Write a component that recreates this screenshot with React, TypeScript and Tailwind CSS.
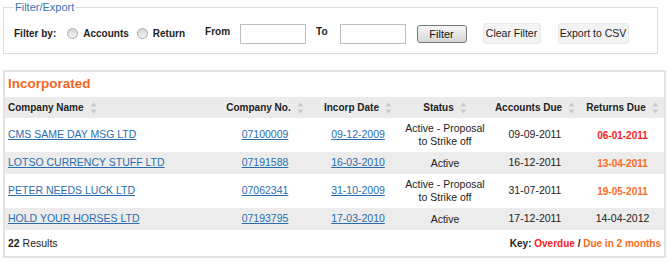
import React from 'react';

const rows = [
  { name: 'CMS SAME DAY MSG LTD', no: '07100009', incorp: '09-12-2009', status: 'Active - Proposal to Strike off', accounts: '09-09-2011', returns: '06-01-2011', tone: 'overdue' },
  { name: 'LOTSO CURRENCY STUFF LTD', no: '07191588', incorp: '16-03-2010', status: 'Active', accounts: '16-12-2011', returns: '13-04-2011', tone: 'soon' },
  { name: 'PETER NEEDS LUCK LTD', no: '07062341', incorp: '31-10-2009', status: 'Active - Proposal to Strike off', accounts: '31-07-2011', returns: '19-05-2011', tone: 'soon' },
  { name: 'HOLD YOUR HORSES LTD', no: '07193795', incorp: '17-03-2010', status: 'Active', accounts: '17-12-2011', returns: '14-04-2012', tone: 'none' },
];

const toneClass: Record<string, string> = {
  overdue: 'font-bold text-[10px] text-[#ff1a1a]',
  soon: 'font-bold text-[10px] text-[#ff6a1a]',
  none: 'text-[#222]',
};

const SortIcon = () => (
  <svg width="7" height="12" viewBox="0 0 7 12" className="ml-[6px] inline-block shrink-0">
    <path d="M3.5 0.5 L6.5 4.5 L0.5 4.5 Z" fill="#cacaca" />
    <path d="M3.5 11.5 L6.5 7.5 L0.5 7.5 Z" fill="#cacaca" />
  </svg>
);

const Radio = () => (
  <span className="inline-block h-[11px] w-[11px] shrink-0 rounded-full border border-[#a8a8a8] bg-gradient-to-b from-[#d6d6d6] to-[#f5f5f5]" />
);

const Header = ({ label, align = 'center' }: { label: string; align?: 'left' | 'center' }) => (
  <th className={`px-[3px] text-[10px] font-bold ${align === 'left' ? 'text-left' : 'text-center'}`}>
    <span className="inline-flex items-center whitespace-nowrap">
      {label}
      <SortIcon />
    </span>
  </th>
);

export default function App() {
  return (
    <div className="h-[262px] w-[670px] overflow-hidden bg-white text-[10.5px] text-[#222]" style={{ fontFamily: '"Liberation Sans", Arial, sans-serif' }}>
      <div className="pl-[3px] pr-[12px]">
        <fieldset className="m-0 border border-[#dcdcdc] px-[10px] py-0">
          <legend className="px-[1px] text-[11px] leading-[14px] text-[#3a72b6]">Filter/Export</legend>
          <div className="flex h-[39px] items-center whitespace-nowrap text-[10px] font-bold">
            <span>Filter by:</span>
            <span className="ml-[11px] flex items-center gap-[5px]">
              <Radio />
              <span>Accounts</span>
            </span>
            <span className="ml-[8px] flex items-center gap-[5px]">
              <Radio />
              <span>Return</span>
            </span>
            <span className="-mt-[5px] ml-[20px]">From</span>
            <span className="ml-[10px] h-[20px] w-[66px] border border-[#bdbdbd] bg-white" />
            <span className="-mt-[5px] ml-[10px]">To</span>
            <span className="ml-[12px] h-[20px] w-[66px] border border-[#bdbdbd] bg-white" />
            <button className="ml-[11px] h-[18px] w-[50px] rounded-[3px] border border-[#777] bg-gradient-to-b from-[#f6f6f6] to-[#d6d6d6] text-[11px] font-normal leading-[16px] text-[#111]">
              Filter
            </button>
            <button className="ml-[16px] h-[21px] w-[58px] rounded-[3px] border border-[#e8e8e8] bg-[#f3f3f3] text-[10.5px] font-normal text-[#222]">
              Clear Filter
            </button>
            <button className="ml-[17px] h-[21px] w-[71px] rounded-[3px] border border-[#e8e8e8] bg-[#f3f3f3] text-[10.5px] font-normal text-[#222]">
              Export to CSV
            </button>
          </div>
        </fieldset>
      </div>

      <div className="ml-[3px] mt-[16px] h-[188px] w-[663px] border-2 border-[#e2e2e2] bg-white">
        <div className="h-[25px] pl-[3px] pt-[3px] text-[13.5px] font-bold leading-[18px] text-[#f26522]">Incorporated</div>
        <table className="w-full table-fixed border-collapse">
          <colgroup>
            <col className="w-[210px]" />
            <col className="w-[100px]" />
            <col className="w-[86px]" />
            <col className="w-[88px]" />
            <col className="w-[92px]" />
            <col />
          </colgroup>
          <thead>
            <tr className="h-[21px] bg-[#ebebeb]">
              <Header label="Company Name" align="left" />
              <Header label="Company No." />
              <Header label="Incorp Date" />
              <Header label="Status" />
              <Header label="Accounts Due" />
              <Header label="Returns Due" />
            </tr>
          </thead>
          <tbody>
            {rows.map((r, i) => (
              <tr key={r.no} className={i % 2 === 1 ? 'h-[22px] bg-[#ececec]' : 'h-[34px] bg-white'}>
                <td className="px-[3px] text-left">
                  <a href="#" className="whitespace-nowrap text-[#2a6cb0] underline">{r.name}</a>
                </td>
                <td className="px-[3px] text-center">
                  <a href="#" className="text-[#2a6cb0] underline">{r.no}</a>
                </td>
                <td className="px-[3px] text-center">
                  <a href="#" className="text-[#2a6cb0] underline">{r.incorp}</a>
                </td>
                <td className="px-[3px] text-center leading-[13px]">{r.status}</td>
                <td className="px-[3px] text-center">{r.accounts}</td>
                <td className={`px-[3px] text-center ${toneClass[r.tone]}`}>{r.returns}</td>
              </tr>
            ))}
          </tbody>
        </table>
        <div className="flex h-[27px] items-center justify-between px-[3px]">
          <span>
            <span className="font-bold">22</span> Results
          </span>
          <span className="text-[10px] font-bold">
            Key: <span className="text-[#ff1a1a]">Overdue</span> / <span className="text-[#ff6a1a]">Due in 2 months</span>
          </span>
        </div>
      </div>
    </div>
  );
}
